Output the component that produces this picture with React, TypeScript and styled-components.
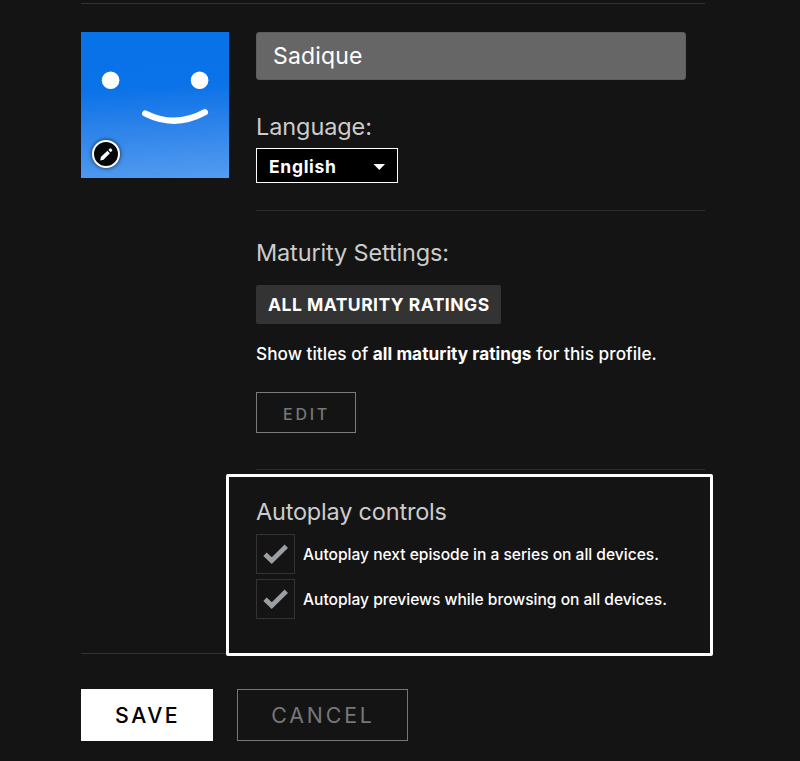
import React from "react";
import styled, { createGlobalStyle } from "styled-components";

const GlobalStyle = createGlobalStyle`
  *, *::before, *::after { box-sizing: border-box; }
  html, body { margin: 0; background: #141414; }
  body { font-family: Inter, "Liberation Sans", sans-serif; color: #fff; }
`;

const Page = styled.main`
  width: 800px;
  height: 761px;
  overflow: hidden;
  background: #141414;
  padding: 3px 95px 0 81px;
`;

const ProfileEntry = styled.div`
  display: grid;
  grid-template-columns: 148px 449px;
  column-gap: 27px;
  height: 651px;
  padding-top: 28px;
  border-top: 1px solid #333;
  border-bottom: 1px solid #333;
`;

const Avatar = styled.div`
  position: relative;
  width: 148px;
  height: 146px;
  background: linear-gradient(177deg, #0872e8 0%, #0b72e8 38%, #2f84ea 66%, #539cf0 100%);
`;

const Face = styled.svg`
  display: block;
  width: 148px;
  height: 146px;
`;

const EditBadge = styled.button`
  position: absolute;
  left: 11px;
  bottom: 10px;
  display: grid;
  place-items: center;
  width: 28px;
  height: 28px;
  padding: 0;
  border: 2px solid #fff;
  border-radius: 50%;
  background: #05070b;
  box-shadow: 0 0 4px rgba(0, 0, 0, 0.75);
`;

const Details = styled.div`
  display: flex;
  flex-direction: column;
`;

const NameInput = styled.input`
  width: 430px;
  height: 48px;
  padding: 0 16px;
  border: 1px solid #5d5d5d;
  border-radius: 3px;
  background: #666;
  color: #fff;
  font: 400 23px Inter, sans-serif;
  letter-spacing: 0.18px;
  outline: none;
`;

const Heading = styled.h2<{ $spacing: number }>`
  margin: 0;
  height: 28px;
  font-size: 23.5px;
  line-height: 28px;
  font-weight: 400;
  letter-spacing: ${(p) => p.$spacing}px;
  color: #ccc;
  white-space: nowrap;
`;

const Section = styled.section<{ $top: number; $height: number; $last?: boolean }>`
  position: relative;
  height: ${(p) => p.$height}px;
  padding-top: ${(p) => p.$top}px;
  border-bottom: ${(p) => (p.$last ? "none" : "1px solid #2d2d2d")};
`;

const Select = styled.button`
  display: flex;
  align-items: center;
  justify-content: space-between;
  width: 142px;
  height: 35px;
  margin-top: 7px;
  padding: 2px 11px 0 12px;
  border: 1px solid #fff;
  background: #000;
  color: #fff;
  font: 700 17.5px Inter, sans-serif;
  letter-spacing: 0.7px;
`;

const Caret = styled.svg`
  display: block;
`;

const RatingBadge = styled.div`
  display: flex;
  align-items: center;
  width: 245px;
  height: 39px;
  margin-top: 18px;
  padding-left: 12px;
  border-radius: 2px;
  background: #333;
  font-size: 17.5px;
  font-weight: 700;
  letter-spacing: 0.48px;
  white-space: nowrap;
`;

const Note = styled.p`
  margin: 18px 0 0;
  height: 24px;
  font-size: 17.2px;
  line-height: 24px;
  font-weight: 500;
  letter-spacing: 0.045px;
  white-space: nowrap;

  b {
    font-weight: 700;
  }
`;

const EditButton = styled.button`
  display: block;
  width: 100px;
  height: 41px;
  margin-top: 26px;
  padding: 2px 0 0 1px;
  border: 1px solid #7a7a7a;
  background: transparent;
  color: #777;
  font: 500 16px Inter, sans-serif;
  letter-spacing: 2.7px;
`;

const Highlight = styled.div`
  position: absolute;
  left: -30px;
  top: 4px;
  width: 487px;
  height: 182px;
  border: 3px solid #fff;
  border-radius: 2px;
  pointer-events: none;
`;

const CheckList = styled.div`
  display: flex;
  flex-direction: column;
  gap: 5px;
  margin-top: 8px;
`;

const CheckRow = styled.div`
  display: flex;
  align-items: center;
  gap: 8px;
  height: 40px;
`;

const CheckBox = styled.span`
  display: grid;
  place-items: center;
  flex: none;
  width: 39px;
  height: 40px;
  border: 1px solid #333;
`;

const CheckLabel = styled.span`
  font-size: 15.6px;
  font-weight: 500;
  letter-spacing: -0.02px;
  white-space: nowrap;
`;

const Actions = styled.div`
  display: flex;
  gap: 24px;
  padding-top: 35px;
`;

const ActionButton = styled.button<{ $primary?: boolean }>`
  width: ${(p) => (p.$primary ? 132 : 171)}px;
  height: 52px;
  padding: 0 0 1px 1px;
  border: 1px solid ${(p) => (p.$primary ? "#fff" : "#777")};
  background: ${(p) => (p.$primary ? "#fff" : "transparent")};
  color: ${(p) => (p.$primary ? "#000" : "#777")};
  font: ${(p) => (p.$primary ? 500 : 400)} 21.3px Inter, sans-serif;
  letter-spacing: ${(p) => (p.$primary ? 2.4 : 2.85)}px;
`;

const Tick = () => (
  <svg width="26" height="22" viewBox="0 0 26 22">
    <path d="M2 11.2 8.7 17.6 23.3 3.2" fill="none" stroke="#9a9fa3" strokeWidth="4.8" />
  </svg>
);

const autoplayOptions = [
  "Autoplay next episode in a series on all devices.",
  "Autoplay previews while browsing on all devices.",
];

export default function App() {
  return (
    <>
      <GlobalStyle />
      <Page>
        <ProfileEntry>
          <Avatar>
            <Face viewBox="0 0 148 146">
              <circle cx="29.6" cy="48.2" r="8.8" fill="#fff" />
              <circle cx="118.6" cy="48.2" r="8.8" fill="#fff" />
              <path d="M64.3 81.5Q94 96.5 123.8 80.3" fill="none" stroke="#fff" strokeWidth="6.4" strokeLinecap="round" />
            </Face>
            <EditBadge aria-label="Edit avatar">
              <svg width="14.5" height="14.5" viewBox="0 0 16 16" fill="#fff">
                <path d="M1.4 14.8 2 11 9.3 4.1 12 6.8 5 14Z" />
                <path d="M10.3 3.2 12 1.6Q12.7 1.1 13.3 1.7L14.5 2.9Q15 3.6 14.4 4.2L13 5.8Z" />
              </svg>
            </EditBadge>
          </Avatar>
          <Details>
            <NameInput defaultValue="Sadique" aria-label="Profile name" />
            <Section $top={33} $height={131}>
              <Heading $spacing={-0.1}>Language:</Heading>
              <Select>
                English
                <Caret width="14" height="8" viewBox="0 0 14 8">
                  <path d="M1.5 1H13L7.3 7Z" fill="#fff" />
                </Caret>
              </Select>
            </Section>
            <Section $top={28} $height={259}>
              <Heading $spacing={-0.15}>Maturity Settings:</Heading>
              <RatingBadge>ALL MATURITY RATINGS</RatingBadge>
              <Note>
                Show titles of <b>all maturity ratings</b> for this profile.
              </Note>
              <EditButton>EDIT</EditButton>
            </Section>
            <Section $top={28} $height={180} $last>
              <Highlight />
              <Heading $spacing={-0.2}>Autoplay controls</Heading>
              <CheckList>
                {autoplayOptions.map((label) => (
                  <CheckRow key={label}>
                    <CheckBox>
                      <Tick />
                    </CheckBox>
                    <CheckLabel>{label}</CheckLabel>
                  </CheckRow>
                ))}
              </CheckList>
            </Section>
          </Details>
        </ProfileEntry>
        <Actions>
          <ActionButton $primary>SAVE</ActionButton>
          <ActionButton>CANCEL</ActionButton>
        </Actions>
      </Page>
    </>
  );
}
